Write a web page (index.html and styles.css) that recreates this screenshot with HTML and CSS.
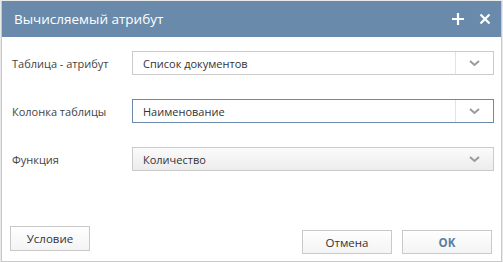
FILE: index.html
```html
<!DOCTYPE html>
<html lang="ru">
<head>
  <meta charset="UTF-8" />
  <title>Вычисляемый атрибут</title>
  <link rel="stylesheet" href="styles.css">
</head>
<body>

  <div class="dialog">
    <div class="dialog-header">
      <span class="dialog-title">Вычисляемый атрибут</span>
      <span class="header-tools">
        <svg class="tool" width="14" height="14" viewBox="0 0 14 14">
          <path d="M7 1v12M1 7h12" stroke="#fff" stroke-width="2.2" fill="none"/>
        </svg>
        <svg class="tool" width="12" height="12" viewBox="0 0 12 12">
          <path d="M1.5 1.5l9 9M10.5 1.5l-9 9" stroke="#fff" stroke-width="2.2" fill="none"/>
        </svg>
      </span>
    </div>

    <div class="dialog-body">
      <label class="field-label">Таблица - атрибут</label>
      <div class="combo">
        <span class="combo-text">Список документов</span>
        <span class="combo-arrow">
          <svg width="11" height="7" viewBox="0 0 11 7"><path d="M1 1l4.5 4 4.5-4" stroke="#9a9a9a" stroke-width="2" fill="none"/></svg>
        </span>
      </div>

      <label class="field-label">Колонка таблицы</label>
      <div class="combo focused">
        <span class="combo-text">Наименование</span>
        <span class="combo-arrow">
          <svg width="11" height="7" viewBox="0 0 11 7"><path d="M1 1l4.5 4 4.5-4" stroke="#9a9a9a" stroke-width="2" fill="none"/></svg>
        </span>
      </div>

      <label class="field-label">Функция</label>
      <div class="combo readonly">
        <span class="combo-text">Количество</span>
        <span class="combo-arrow">
          <svg width="11" height="7" viewBox="0 0 11 7"><path d="M1 1l4.5 4 4.5-4" stroke="#9a9a9a" stroke-width="2" fill="none"/></svg>
        </span>
      </div>
    </div>

    <div class="dialog-footer">
      <button class="btn btn-condition">Условие</button>
      <span class="footer-right">
        <button class="btn">Отмена</button>
        <button class="btn btn-ok">OK</button>
      </span>
    </div>
  </div>

</body>
</html>
```

FILE: styles.css
```css
body {
  margin: 0;
  padding: 1px 1px 0 1px;
  background: #e9e9e9;
  font-family: "Open Sans", "Noto Sans", Arial, sans-serif;
  font-size: 11px;
  color: #333;
}

.dialog {
  width: 499px;
  height: 260px;
  background: #fff;
  border: 1px solid #c9c9c9;
  border-top: none;
  display: flex;
  flex-direction: column;
}

.dialog-header {
  height: 36px;
  background: #6a8aab;
  display: flex;
  align-items: center;
  padding: 0 10px 0 12px;
}

.dialog-title {
  color: #fff;
  font-size: 13.5px;
  flex: 1;
}

.header-tools {
  display: flex;
  align-items: center;
  gap: 14px;
}

.tool {
  display: block;
}

.dialog-body {
  display: grid;
  grid-template-columns: 120px 1fr;
  row-gap: 24px;
  align-items: center;
  padding: 14px 7px 0 10px;
}

.field-label {
  color: #444;
}

.combo {
  height: 22px;
  border: 1px solid #cbcbcb;
  background: #fff;
  display: flex;
  align-items: center;
}

.combo.focused {
  border-color: #6a8aab;
}

.combo.readonly {
  background: linear-gradient(#fbfbfb, #ececec);
}

.combo-text {
  flex: 1;
  padding-left: 10px;
}

.combo-arrow {
  width: 37px;
  height: 100%;
  border-left: 1px solid #e3e3e3;
  display: flex;
  align-items: center;
  justify-content: center;
}

.combo.readonly .combo-arrow {
  border-left: none;
}

.dialog-footer {
  margin-top: auto;
  display: flex;
  align-items: flex-end;
  justify-content: space-between;
  padding: 0 9px 7px 8px;
}

.btn {
  font-family: inherit;
  font-size: 11.5px;
  color: #333;
  height: 24px;
  width: 90px;
  border: 1px solid #c9c9c9;
  background: linear-gradient(#fefefe, #f4f4f4);
  padding: 0;
}

.btn-condition {
  width: 80px;
  height: 25px;
  margin-bottom: 3px;
}

.footer-right {
  display: flex;
  gap: 10px;
}

.btn-ok {
  color: #5a7ea4;
  font-weight: bold;
}
```
